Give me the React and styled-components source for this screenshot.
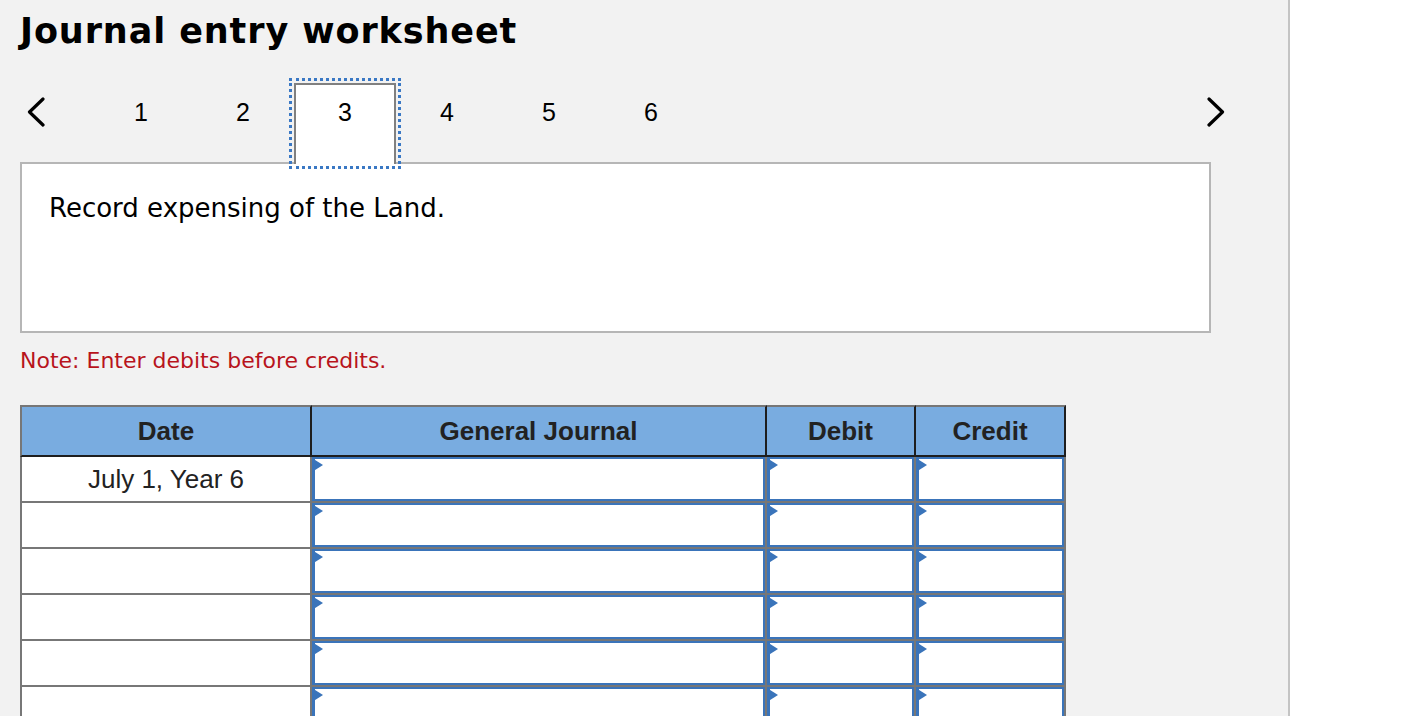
import React from "react";
import styled, { createGlobalStyle, css } from "styled-components";

const GlobalStyle = createGlobalStyle`
  html, body {
    margin: 0;
    padding: 0;
    background: #ffffff;
    overflow: hidden;
  }
  * {
    box-sizing: border-box;
  }
`;

const tabs = [1, 2, 3, 4, 5, 6];
const columns = ["Date", "General Journal", "Debit", "Credit"];
const rows = ["July 1, Year 6", "", "", "", "", "", "", ""];

const Chevron = ({ flip }) => (
  <svg width="18" height="30" viewBox="0 0 18 30">
    <path
      d={flip ? "M2 2 L15.5 15 L2 28" : "M16 2 L2.5 15 L16 28"}
      fill="none"
      stroke="#000"
      strokeWidth="3.2"
      strokeLinecap="round"
      strokeLinejoin="round"
    />
  </svg>
);

const App = () => {
  return (
    <>
      <GlobalStyle />
      <Panel>
        <Title>Journal entry worksheet</Title>
        <TabRow>
          <NavArrow $side="prev" aria-label="previous">
            <Chevron />
          </NavArrow>
          {tabs.map((n) => (
            <Tab key={n} $active={n === 3}>
              {n}
            </Tab>
          ))}
          <NavArrow $side="next" aria-label="next">
            <Chevron flip />
          </NavArrow>
        </TabRow>
        <Prompt>Record expensing of the Land.</Prompt>
        <Note>Note: Enter debits before credits.</Note>
        <Grid>
          {columns.map((c, i) => (
            <HeadCell key={c} $first={i === 0}>
              {c}
            </HeadCell>
          ))}
          {rows.map((date, r) => (
            <React.Fragment key={r}>
              <DateCell>{date}</DateCell>
              <EntryCell>
                <Entry />
              </EntryCell>
              <EntryCell>
                <Entry />
              </EntryCell>
              <EntryCell>
                <Entry />
              </EntryCell>
            </React.Fragment>
          ))}
        </Grid>
      </Panel>
    </>
  );
};

const Panel = styled.main`
  width: 1290px;
  min-height: 100vh;
  background: #f2f2f2;
  border-right: 2px solid #c4c4c4;
  padding: 11px 0 0 20px;
`;

const Title = styled.h1`
  margin: 0;
  font-family: "DejaVu Sans", Verdana, sans-serif;
  font-weight: bold;
  font-size: 35px;
  letter-spacing: 0.9px;
  line-height: 40px;
  color: #000;
`;

const TabRow = styled.nav`
  display: flex;
  align-items: flex-start;
  width: 1206px;
  height: 81px;
  margin-top: 32px;
  margin-bottom: -2px;
  position: relative;
  z-index: 1;
`;

const NavArrow = styled.button`
  display: flex;
  align-items: center;
  justify-content: center;
  width: 18px;
  height: 30px;
  margin-top: 14px;
  padding: 0;
  border: 0;
  background: transparent;
  cursor: pointer;

  ${(props) =>
    props.$side === "prev"
      ? css`
          margin-left: 7px;
          margin-right: 45px;
        `
      : css`
          margin-left: auto;
          margin-right: 1px;
        `};
`;

const Tab = styled.div`
  width: 102px;
  height: 81px;
  display: flex;
  justify-content: center;
  padding-top: 15px;
  font-family: "Liberation Sans", Arial, sans-serif;
  font-size: 25px;
  line-height: 28px;
  color: #000;

  ${(props) =>
    props.$active &&
    css`
      background: #fff;
      border: 2px solid #808080;
      border-bottom: 0;
      outline: 3px dotted #3a78c4;
      outline-offset: 2px;
      padding-top: 13px;
    `};
`;

const Prompt = styled.section`
  width: 1191px;
  height: 171px;
  background: #fff;
  border: 2px solid #b6b6b6;
  padding: 28px 0 0 27px;
  font-family: "DejaVu Sans", Verdana, sans-serif;
  font-size: 26px;
  line-height: 32px;
  color: #000;
`;

const Note = styled.p`
  margin: 14px 0 0;
  font-family: "DejaVu Sans", Verdana, sans-serif;
  font-size: 22px;
  line-height: 28px;
  color: #b8141c;
`;

const Grid = styled.div`
  display: grid;
  grid-template-columns: 292px 455px 149px 150px;
  grid-auto-rows: 46px;
  grid-template-rows: 52px;
  margin-top: 30px;
  font-family: "Liberation Sans", Arial, sans-serif;
  font-size: 26px;
  color: #222;
`;

const HeadCell = styled.div`
  display: flex;
  align-items: center;
  justify-content: center;
  background: #79ace0;
  font-weight: bold;
  border-top: 2px solid #777;
  border-bottom: 2px solid #1e1e1e;
  border-right: 2px solid #1e1e1e;
  ${(props) =>
    props.$first &&
    css`
      border-left: 2px solid #777;
    `};
`;

const DateCell = styled.div`
  display: flex;
  align-items: center;
  justify-content: center;
  background: #fff;
  border-left: 2px solid #777;
  border-right: 2px solid #777;
  border-bottom: 2px solid #777;
`;

const EntryCell = styled.div`
  position: relative;
  background: #fff;
  border-right: 2px solid #777;
  border-bottom: 2px solid #777;

  &::before {
    content: "";
    position: absolute;
    top: 1px;
    left: 0;
    border-left: 11px solid #3a74ba;
    border-top: 7.5px solid transparent;
    border-bottom: 7.5px solid transparent;
  }
`;

const Entry = styled.input`
  display: block;
  width: 100%;
  height: 100%;
  margin: 0;
  border: 2px solid #3a74ba;
  border-left-width: 3px;
  background: #fff;
  font-family: "Liberation Sans", Arial, sans-serif;
  font-size: 20px;
  outline: none;
`;

export default App;
